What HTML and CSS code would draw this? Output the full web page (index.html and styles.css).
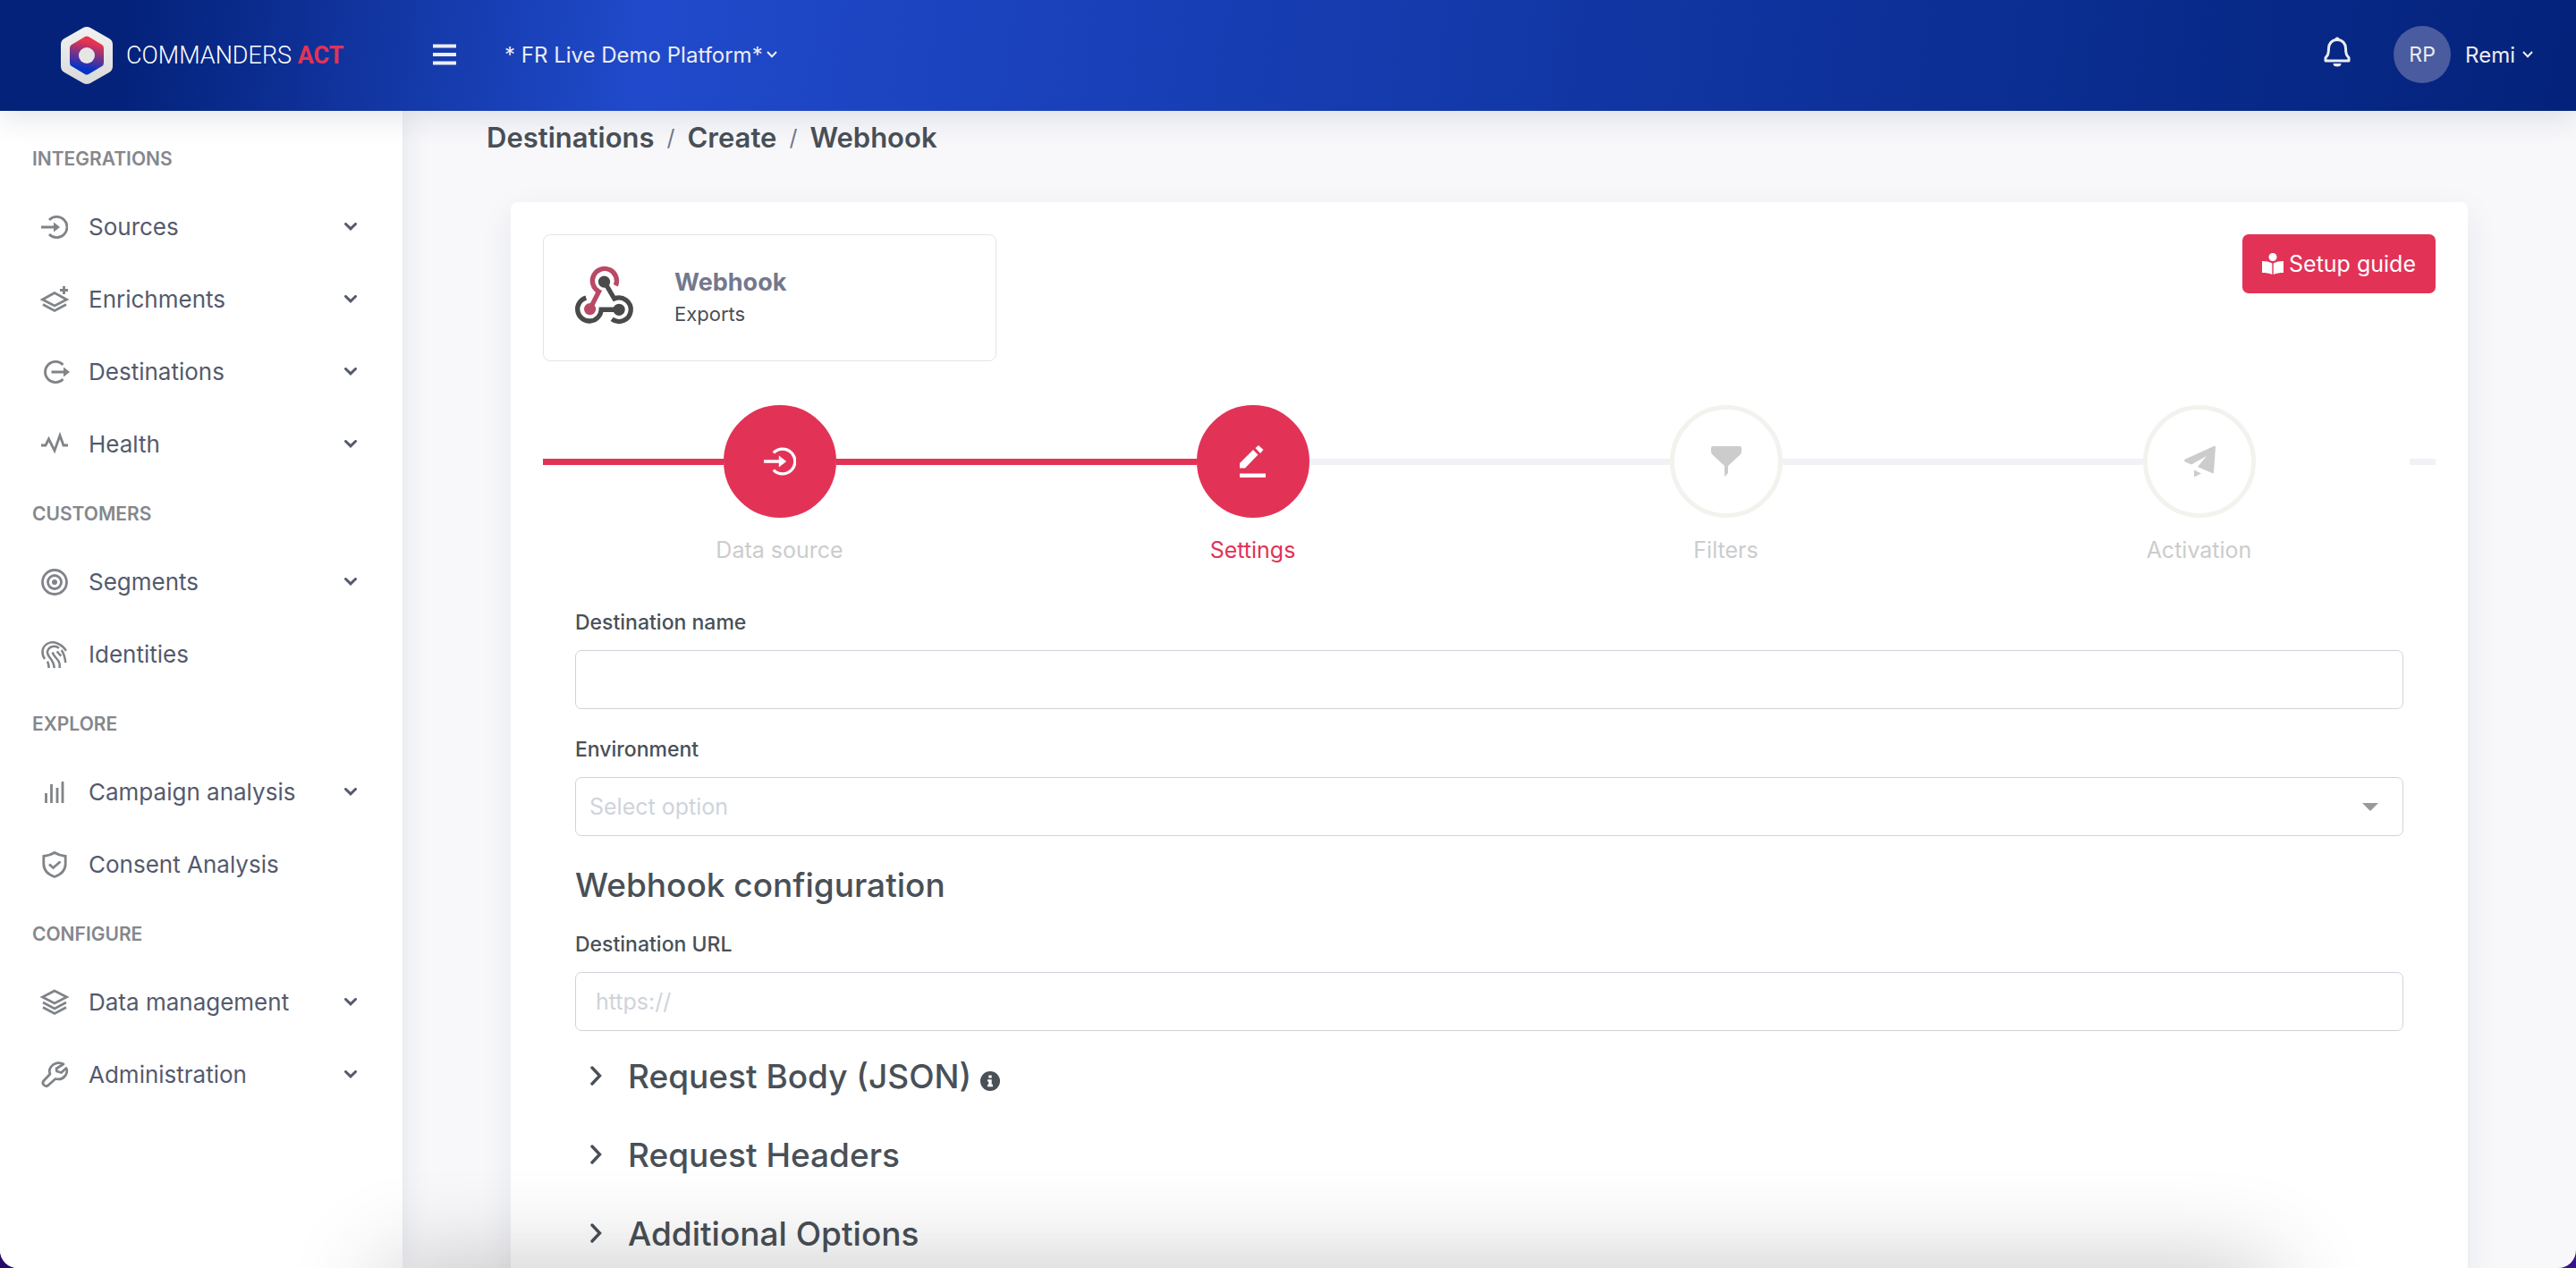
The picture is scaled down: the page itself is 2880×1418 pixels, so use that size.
FILE: index.html
```html
<!DOCTYPE html>
<html lang="en">
<head>
<meta charset="utf-8">
<meta name="viewport" content="width=device-width, initial-scale=1">
<title>Destinations / Create / Webhook</title>
<link rel="stylesheet" href="styles.css">
</head>
<body>
<svg class="sprite" aria-hidden="true">
  <symbol id="down" viewBox="0 0 14 9"><path d="M1.5 1.5 7 6.8l5.500-5.300" fill="none" stroke="currentColor" stroke-width="3" stroke-linecap="round"/></symbol>
  <symbol id="down-thin" viewBox="0 0 12 8"><path d="M1 1l5 5.300 5-5.300" fill="none" stroke="currentColor" stroke-width="2"/></symbol>
  <symbol id="right" viewBox="0 0 14 22"><path d="M2 2l8.500 9L2 20" fill="none" stroke="currentColor" stroke-width="3.400" stroke-linecap="round"/></symbol>
  <symbol id="source" viewBox="0 0 30 30"><path d="M9 7a11.600 11.600 0 1 1 0 16M0 15h15" fill="none" stroke="currentColor" stroke-width="2.800"/><path d="M14 9.500 21 15l-7 5.500z" fill="currentColor"/></symbol>
</svg>
<div class="app">
  <header class="topbar">
    <a class="brand" href="#">
      <svg class="brand-mark" viewBox="0 0 60 66" aria-hidden="true">
        <defs>
          <linearGradient id="shell" x1="0" y1="0" x2="0" y2="1"><stop offset="0" stop-color="#f2f2f2"/><stop offset="1" stop-color="#d9d9d9"/></linearGradient>
          <linearGradient id="core" x1="0.600" y1="0" x2="0.400" y2="1"><stop offset="0.150" stop-color="#e8344f"/><stop offset="0.850" stop-color="#0433c4"/></linearGradient>
        </defs>
        <path d="M26 2q4-2 8 0l21 12q4 2 4 7v24q0 5-4 7L34 64q-4 2-8 0L5 52q-4-2-4-7V21q0-5 4-7z" fill="url(#shell)"/>
        <path d="M28 12q2-1 4 0l15 9q2 1 2 4v16q0 3-2 4l-15 9q-2 1-4 0l-15-9q-2-1-2-4V25q0-3 2-4z" fill="url(#core)"/>
        <circle cx="30" cy="33" r="9" fill="#e6e6e6"/>
      </svg>
      <span class="brand-name">COMMANDERS <b>ACT</b></span>
    </a>
    <button class="plain burger" type="button" aria-label="Toggle menu">
      <svg viewBox="0 0 26 24"><path d="M0 2.500h26M0 12h26M0 21.500h26" stroke="currentColor" stroke-width="4"/></svg>
    </button>
    <button class="plain platform" type="button">* FR Live Demo Platform*<svg class="thin"><use href="#down-thin"/></svg></button>
    <div class="account">
      <button class="plain bell" type="button" aria-label="Notifications">
        <svg viewBox="0 0 30 34"><path d="M15 3.500C9 3.500 5.500 8 5.500 13c0 7-1.500 8.500-3.500 10.500v3.500h26v-3.500c-2-2-3.500-3.500-3.500-10.500 0-5-3.500-9.500-9.500-9.500z" fill="none" stroke="currentColor" stroke-width="3" stroke-linejoin="round"/><path d="M12.500 3a2.500 2.500 0 0 1 5 0zM10.500 30h9a4.500 3.500 0 0 1-9 0z" fill="currentColor"/></svg>
      </button>
      <button class="plain user" type="button"><span class="avatar">RP</span>Remi<svg class="thin"><use href="#down-thin"/></svg></button>
    </div>
  </header>
  <div class="body">
    <nav class="sidebar" aria-label="Main">
      <h2 class="group">INTEGRATIONS</h2>
      <button class="item" type="button"><svg class="icon"><use href="#source"/></svg><span>Sources</span><svg class="chev"><use href="#down"/></svg></button>
      <button class="item" type="button"><svg class="icon line" viewBox="0 0 30 30"><path d="M15 7.500 1.500 15 15 22l13.500-7zM2 20.500 15 27.500l13-7M25.500 0v9M21 4.500h9"/></svg><span>Enrichments</span><svg class="chev"><use href="#down"/></svg></button>
      <button class="item" type="button"><svg class="icon line" viewBox="0 0 30 30"><path d="M24.500 7a11.600 11.600 0 1 0 0 16M11.500 15H26"/><path class="solid" d="M25 9.500 32 15l-7 5.500z"/></svg><span>Destinations</span><svg class="chev"><use href="#down"/></svg></button>
      <button class="item" type="button"><svg class="icon line" viewBox="0 0 30 30"><path d="M0 16h5l3.500-7 6.500 13L21 5l4 11h5"/></svg><span>Health</span><svg class="chev"><use href="#down"/></svg></button>
      <h2 class="group">CUSTOMERS</h2>
      <button class="item" type="button"><svg class="icon line" viewBox="0 0 30 30"><circle cx="15" cy="15" r="13.500"/><circle cx="15" cy="15" r="7.500"/><circle class="solid" cx="15" cy="15" r="3"/></svg><span>Segments</span><svg class="chev"><use href="#down"/></svg></button>
      <a class="item" href="#"><svg class="icon line" viewBox="0 0 90 90"><g stroke-width="7.500"><path d="M84 32C66 6 40-2 20 9 2 20 0 42 12 60"/><path d="M60 23C44 12 24 18 21 36c-1 18 22 24 23 54"/><path d="M38 37c4 16 22 24 24 40"/><path d="M53 34c5 6 8 10 14 16M68 30c9 12 12 24 14 42M21 68c3 6 5 12 5 22M62 76v14"/></g></svg><span>Identities</span></a>
      <h2 class="group">EXPLORE</h2>
      <button class="item" type="button"><svg class="icon line" viewBox="0 0 30 30"><path d="M5.500 16v11M11.500 6v21M18 10v17M24 3v24"/></svg><span>Campaign analysis</span><svg class="chev"><use href="#down"/></svg></button>
      <a class="item" href="#"><svg class="icon line" viewBox="0 0 30 30"><path d="M15 1.500C11 4 7 5 2.800 5.500V14c0 7 5.200 12 12.200 14.500C22 26 27.200 21 27.200 14V5.500C23 5 19 4 15 1.500zM9 14.500l4.500 4 8-7"/></svg><span>Consent Analysis</span></a>
      <h2 class="group">CONFIGURE</h2>
      <button class="item" type="button"><svg class="icon line" viewBox="0 0 30 30"><path d="M15 2 1.500 9 15 16l13.500-7zM2 15l13 7 13-7M2 20.500l13 7 13-7"/></svg><span>Data management</span><svg class="chev"><use href="#down"/></svg></button>
      <button class="item" type="button"><svg class="icon line" viewBox="0 0 30 30"><path stroke-linejoin="round" d="M25 3C20 0 14 2 11 6c-2 3-2 6-1 8L2.500 22c-2 3 2 7 5 5l8.500-7.500c4 1 8 0 10.500-3 2.500-3 3-7 1.500-9l-5.500 5-5-1.500L17 8z"/></svg><span>Administration</span><svg class="chev"><use href="#down"/></svg></button>
    </nav>
    <main class="main">
      <nav class="crumbs" aria-label="Breadcrumb"><a href="#">Destinations</a><i>/</i><a href="#">Create</a><i>/</i><span>Webhook</span></nav>
      <section class="card">
        <div class="card-head">
          <div class="connector">
            <svg viewBox="36 60 196 198" aria-hidden="true" fill="none" stroke-width="16">
              <g stroke="#4a4a4a"><path d="M134 104l34 58a40 40 0 1 1-8 69"/><path d="M184 199h-60a40 40 0 1 1-51-40"/></g>
              <path d="M173 118A41 41 0 1 0 116 138L86 197" stroke="#b94a66"/>
              <circle cx="134" cy="105" r="20" fill="#4a4a4a"/><circle cx="184" cy="199" r="20" fill="#4a4a4a"/><circle cx="86" cy="197" r="20" fill="#b94a66"/>
            </svg>
            <div><h1>Webhook</h1><p>Exports</p></div>
          </div>
          <button class="guide" type="button"><svg viewBox="0 0 24 24" aria-hidden="true"><circle cx="12" cy="4.500" r="4.500"/><path d="M0 9c5 0 8.500.8 11.300 2.500V24C8 22.500 4 22 0 22zM24 9c-5 0-8.500.8-11.300 2.500V24c3.300-1.500 7.300-2 11.300-2z"/></svg>Setup guide</button>
        </div>
        <ol class="steps">
          <li class="step done"><span class="rail on"></span><span class="dot"><svg viewBox="0 0 30 30"><use href="#source"/></svg></span><span class="rail on"></span><span class="name">Data source</span></li>
          <li class="step done current" aria-current="step"><span class="rail on"></span><span class="dot"><svg viewBox="0 0 36 36"><path d="M3 25.500V20L18 5l5.500 5.500L9 25.500zM20.500 3 24 0l5.500 5-3.500 4zM3 31.500h29V36H3z" fill="currentColor"/></svg></span><span class="rail"></span><span class="name">Settings</span></li>
          <li class="step"><span class="rail"></span><span class="dot"><svg viewBox="0 0 36 36"><path d="M3 1h30q2 0 2 2v4q0 2-1.500 3.500L20 23v8l-4 4V23L2.500 10.500Q1 9 1 7V3q0-2 2-2z" fill="currentColor"/></svg></span><span class="rail"></span><span class="name">Filters</span></li>
          <li class="step"><span class="rail"></span><span class="dot"><svg viewBox="0 0 36 36"><path d="M34 1q2-1 2 1l-2 28q0 2-2 1l-16-7L26 12 9 21.500 2 18.500q-2-1 0-3zM12 27.500l8 4-8 4z" fill="currentColor"/></svg></span><span class="rail tail"></span><span class="name">Activation</span></li>
        </ol>
        <form class="form">
          <label for="name">Destination name</label>
          <input class="field" id="name" type="text">
          <label for="env">Environment</label>
          <div class="select"><select class="field" id="env"><option>Select option</option></select><svg viewBox="0 0 18 9" aria-hidden="true"><path d="M0 0h18L9 9z" fill="#999"/></svg></div>
          <h2>Webhook configuration</h2>
          <label for="url">Destination URL</label>
          <input class="field" id="url" type="text" placeholder="https://">
          <div class="panels">
            <button class="panel" type="button"><svg class="more"><use href="#right"/></svg>Request Body (JSON)<svg class="info" viewBox="0 0 22 22"><circle cx="11" cy="11" r="11" fill="currentColor"/><path d="M9.300 4.500h3.400v3H9.300zM8 9.200h4.700v5.600H14v2.400H8v-2.400h1.300v-3.200H8z" fill="#fff"/></svg></button>
            <button class="panel" type="button"><svg class="more"><use href="#right"/></svg>Request Headers</button>
            <button class="panel" type="button"><svg class="more"><use href="#right"/></svg>Additional Options</button>
          </div>
        </form>
      </section>
    </main>
  </div>
</div>
<div class="shade" aria-hidden="true"></div>
</body>
</html>
```
FILE: styles.css
```css
* { box-sizing: border-box; margin: 0; padding: 0; }
body { background: linear-gradient(90deg, #250b68, #35148c); font-family: Inter, "Open Sans", sans-serif; font-size: 25px; color: #495057; }
button, input, select { font: inherit; color: inherit; }
button { cursor: pointer; }
a { color: inherit; text-decoration: none; }
svg { display: block; flex: none; overflow: visible; }
.sprite { position: absolute; width: 0; height: 0; }
.plain { background: none; border: 0; }

.app { display: flex; flex-direction: column; height: 100vh; overflow: hidden; background: #f8f8fb; border-radius: 0 0 20px 20px; }

.topbar { position: relative; z-index: 2; display: flex; align-items: center; flex: none; height: 124px; padding: 0 48px 2px 67px; color: #ececf1; font-size: 24px; background: linear-gradient(97deg, #04227a 0%, #04227a 5%, #204acb 25%, #1c43bf 37%, #082b8c 84%, #04227a 100%); box-shadow: 0 8px 30px rgba(18, 38, 63, 0.12); }
.brand { display: flex; align-items: center; gap: 14px; width: 417px; padding-top: 2px; }
.brand-mark { width: 60px; height: 66px; }
.brand-name { font-family: Roboto, sans-serif; font-size: 27px; font-weight: 300; color: #fff; }
.brand-name b { font-weight: 700; color: #e23357; }
.burger svg { width: 26px; height: 24px; }
.platform { display: flex; align-items: center; gap: 4px; margin-left: 54px; }
.thin { width: 12px; height: 8px; }
.account { display: flex; align-items: center; gap: 48px; margin-left: auto; }
.bell { padding-bottom: 6px; }
.bell svg { width: 30px; height: 34px; }
.user { display: flex; align-items: center; gap: 8px; }
.avatar { display: grid; place-items: center; width: 64px; height: 64px; margin-right: 8px; border-radius: 50%; background: #4a5ba0; font-size: 23px; }

.body { display: flex; flex: 1; min-height: 0; }
.sidebar { position: relative; z-index: 1; flex: none; width: 450px; padding-top: 17px; background: #fff; box-shadow: 0 0 30px rgba(18, 38, 63, 0.1); color: #545a6d; }
.group { padding-left: 36px; font-size: 21px; font-weight: 600; line-height: 73px; color: #85878c; }
.item { display: flex; align-items: center; gap: 23px; width: 100%; height: 81px; padding: 0 51px 2px 46px; border: 0; background: none; font-size: 26px; text-align: left; }
.icon { width: 30px; height: 30px; color: #808488; }
.line { fill: none; stroke: currentColor; stroke-width: 2.8px; }
.line g { stroke-width: 7.5px; }
.line .solid { fill: currentColor; stroke: none; }
.chev { width: 14px; height: 9px; margin-left: auto; }

.main { flex: 1; min-width: 0; overflow: hidden; padding: 11px 121px 0; }
.crumbs { display: flex; gap: 14px; margin: 0 0 53px -27px; font-size: 31px; line-height: 38px; font-weight: 600; }
.crumbs i { font-style: normal; font-weight: 400; font-size: 25px; color: #74788d; }
.card { padding: 36px 36px 60px; border-radius: 8px; background: #fff; box-shadow: 0 12px 36px rgba(18, 38, 63, 0.08); }
.card-head { display: flex; justify-content: space-between; align-items: flex-start; }
.connector { display: flex; align-items: center; gap: 46px; width: 507px; height: 142px; padding: 0 35px; border: 1px solid #e3e4e6; border-radius: 8px; }
.connector svg { width: 65px; height: 66px; }
.connector h1 { font-size: 27px; line-height: 36px; font-weight: 700; color: #74788d; }
.connector p { font-size: 22px; line-height: 34px; }
.guide { display: flex; align-items: center; gap: 6px; height: 66px; padding: 0 22px; border: 0; border-radius: 7px; background: #e23357; color: #fff; }
.guide svg { width: 24px; height: 24px; fill: currentColor; }

.steps { display: grid; grid-template-columns: repeat(4, 1fr); margin-top: 49px; list-style: none; }
.step { display: grid; grid-template-columns: 1fr 126px 1fr; align-items: center; row-gap: 18px; color: #ccc; }
.rail { height: 7px; background: #f1f2f6; }
.on { background: #e23357; }
.tail { width: 29px; justify-self: end; }
.dot { display: grid; place-items: center; height: 126px; border: 5px solid #f3f2ee; border-radius: 50%; background: #fff; }
.done .dot { background: #e23357; border-color: #e23357; color: #fff; }
.dot svg { width: 36px; height: 36px; }
.name { grid-column: 1 / -1; text-align: center; line-height: 36px; }
.current .name { color: #e23357; }

.form { display: flex; flex-direction: column; padding: 0 36px; margin-top: 18px; }
.form label { margin: 29px 0 15px; font-size: 23px; line-height: 32px; font-weight: 500; }
.field { width: 100%; height: 66px; padding: 0 22px; border: 1px solid #ced4da; border-radius: 7px; background: #fff; font-size: 25px; }
.field::placeholder { color: #ced4da; opacity: 1; }
.select { display: grid; align-items: center; }
.select > * { grid-area: 1 / 1; }
.select select { padding: 0 15px; appearance: none; color: #ced4da; }
.select svg { width: 18px; height: 9px; margin-right: 28px; justify-self: end; pointer-events: none; }
.form h2 { margin: 28px 0 -6px; font-size: 37px; line-height: 54px; font-weight: 500; }
.panels { margin-top: 6px; }
.panel { display: flex; align-items: center; width: 100%; height: 88px; padding-left: 17px; border: 0; background: none; font-size: 37px; font-weight: 500; }
.more { width: 14px; height: 22px; margin-right: 28px; }
.info { width: 22px; height: 22px; margin: 12px 0 0 10px; }

/* soft shadow rising from the bottom edge of the window */
.shade { position: fixed; z-index: 3; top: 100%; left: 430px; right: 340px; height: 100px; box-shadow: 0 0 110px rgba(0, 0, 0, 0.24); pointer-events: none; }
```
